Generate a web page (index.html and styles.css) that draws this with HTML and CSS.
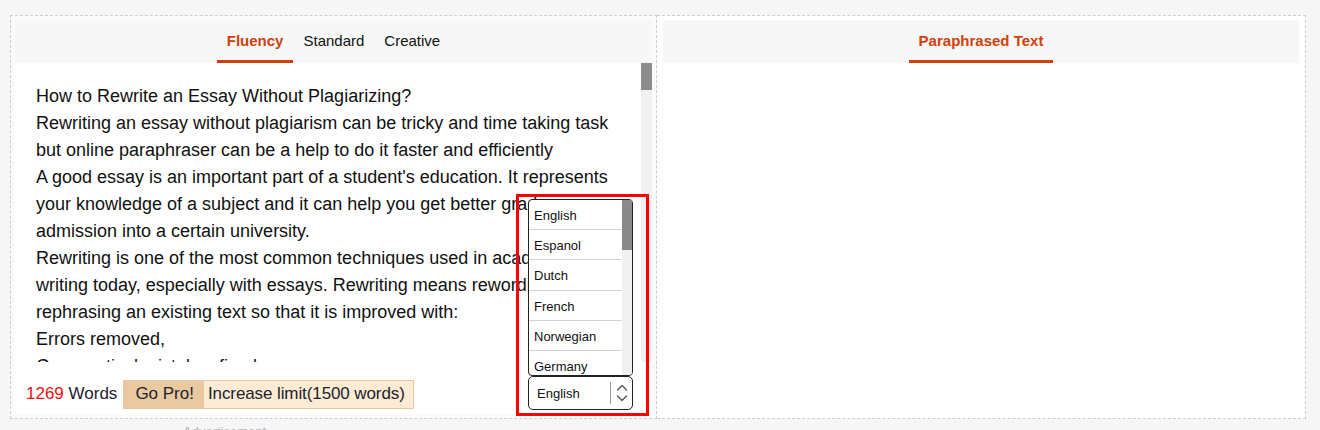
FILE: index.html
```html
<!DOCTYPE html>
<html lang="en">
<head>
<meta charset="utf-8">
<title>Paraphraser</title>
<link rel="stylesheet" href="styles.css">
</head>
<body>
<div class="tool">
  <section class="panel panel-input">
    <nav class="tabs">
      <span class="tab active">Fluency</span>
      <span class="tab">Standard</span>
      <span class="tab">Creative</span>
    </nav>
    <div class="editor">
      <div class="editor-text">
        <p>How to Rewrite an Essay Without Plagiarizing?</p>
        <p>Rewriting an essay without plagiarism can be tricky and time taking task but online paraphraser can be a help to do it faster and efficiently</p>
        <p>A good essay is an important part of a student's education. It represents your knowledge of a subject and it can help you get better grades or admission into a certain university.</p>
        <p>Rewriting is one of the most common techniques used in academic writing today, especially with essays. Rewriting means rewording or rephrasing an existing text so that it is improved with:</p>
        <p>Errors removed,</p>
        <p>Grammatical mistakes fixed,</p>
        <p>Clarity improved.</p>
      </div>
      <div class="scrollbar"><div class="thumb"></div></div>
    </div>
    <div class="footer">
      <span class="count"><span class="num">1269</span> Words</span>
      <span class="pro">
        <span class="pro-btn">Go Pro!</span>
        <span class="pro-text">Increase limit(1500 words)</span>
      </span>
    </div>
    <div class="lang-picker">
      <div class="listbox">
        <ul class="options">
          <li>English</li>
          <li>Espanol</li>
          <li>Dutch</li>
          <li>French</li>
          <li>Norwegian</li>
          <li>Germany</li>
        </ul>
        <div class="list-scroll"><div class="list-thumb"></div></div>
      </div>
      <div class="select">
        <span class="select-value">English</span>
        <span class="select-sep"></span>
        <svg class="chev" width="12" height="22" viewBox="0 0 12 22" fill="none" stroke="#555" stroke-width="1.3" stroke-linecap="round" stroke-linejoin="round">
          <polyline points="1.5,8 6,3.5 10.5,8"/>
          <polyline points="1.5,14 6,18.5 10.5,14"/>
        </svg>
      </div>
    </div>
  </section>
  <section class="panel panel-output">
    <nav class="tabs">
      <span class="tab active out">Paraphrased Text</span>
    </nav>
    <div class="output"></div>
  </section>
</div>
<div class="ad">Advertisement</div>
</body>
</html>
```
FILE: styles.css
```css
* { box-sizing: border-box; }
html, body { margin: 0; padding: 0; }
body {
  background: #f6f6f6;
  font-family: "Liberation Sans", Arial, sans-serif;
  color: #111;
  height: 430px;
  overflow: hidden;
}
.tool {
  display: flex;
  margin: 15px 0 0 10px;
  width: 1296px;
  height: 404px;
}
.panel {
  background: #fbfbfb;
  border: 1px dashed #c9cdd7;
  display: flex;
  flex-direction: column;
}
.panel-input {
  position: relative;
  width: 647px;
  padding: 4px;
}
.panel-output {
  width: 649px;
  border-left: none;
  padding: 4px 6px;
  background: #fff;
}
.tabs {
  height: 43px;
  background: #f7f7f7;
  display: flex;
  justify-content: center;
  flex-shrink: 0;
}
.tab {
  height: 43px;
  line-height: 42px;
  padding: 0 10px;
  font-size: 15px;
  color: #111;
  border-bottom: 3px solid transparent;
}
.tab.active {
  color: #d0400c;
  font-weight: bold;
  border-bottom-color: #d0400c;
}
.tab.out { font-size: 15px; }
.editor {
  height: 299px;
  display: flex;
  background: #fff;
  overflow: hidden;
}
.editor-text {
  flex: 1;
  padding: 20px 20px 0 21px;
  font-size: 18px;
  line-height: 27px;
  color: #111;
  overflow: hidden;
}
.editor-text p { margin: 0; }
.scrollbar {
  width: 11px;
  background: #f1f1f1;
  flex-shrink: 0;
}
.thumb {
  height: 27px;
  background: #8c8c8c;
}
.footer {
  flex: 1;
  background: #fff;
  display: flex;
  align-items: flex-start;
  padding: 18px 0 0 11px;
  font-size: 17px;
  color: #1c2230;
}
.count { line-height: 28px; margin-right: 6px; }
.num { color: #f01010; }
.pro {
  display: flex;
  height: 29px;
  border: 1px solid #e6c9a0;
  background: #fdebd3;
  line-height: 26px;
}
.pro-btn {
  background: #e8c9a0;
  padding: 0 10px 0 11px;
}
.pro-text { padding: 0 8px 0 4px; letter-spacing: -0.1px; }
.output { flex: 1; background: #fff; }

.lang-picker {
  position: absolute;
  left: 505px;
  top: 178px;
  width: 133px;
  height: 222px;
  border: 3px solid #ff0000;
  padding: 2px 13px 3px 9px;
}
.listbox {
  height: 177px;
  border: 1px solid #222;
  border-radius: 4px;
  background: #fff;
  display: flex;
  overflow: hidden;
}
.options {
  list-style: none;
  margin: 0;
  padding: 0;
  flex: 1;
  overflow: hidden;
}
.options li {
  height: 30.2px;
  line-height: 28px;
  padding-top: 2px;
  padding-left: 5px;
  font-size: 13px;
  color: #111;
  border-bottom: 1px solid #d4d4d4;
}
.list-scroll {
  width: 10px;
  background: #f0f0f0;
  flex-shrink: 0;
}
.list-thumb {
  height: 50px;
  background: #8a8a8a;
}
.select {
  height: 34px;
  border: 1px solid #222;
  border-radius: 5px;
  background: #fff;
  display: flex;
  align-items: center;
  padding-left: 8px;
  font-size: 13px;
  color: #111;
}
.select-value { flex: 1; }
.select-sep {
  width: 1px;
  height: 22px;
  background: #9a9a9a;
  margin-right: 5px;
}
.chev { margin-right: 4px; }
.ad {
  margin: 5px 0 0 183px;
  font-size: 13px;
  color: #b5b5b5;
}
```
